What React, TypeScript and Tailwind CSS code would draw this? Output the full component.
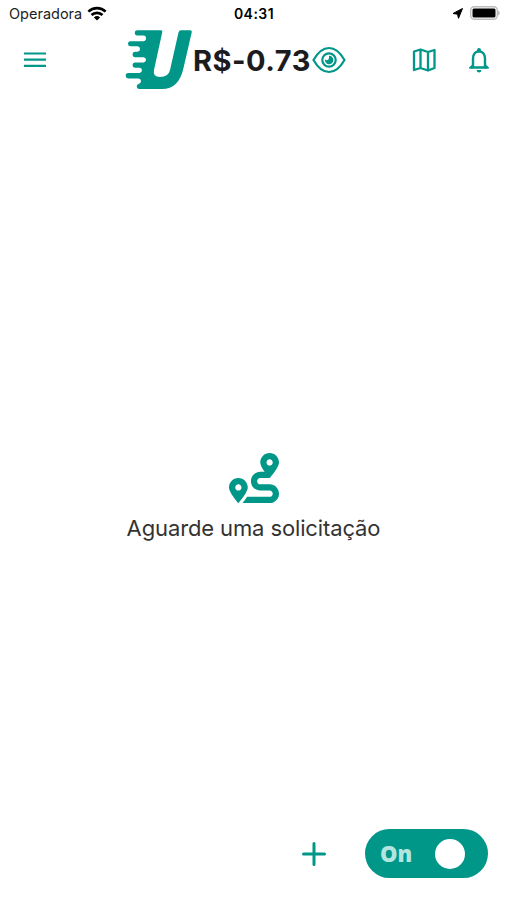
import React, { useState } from 'react';
import { FaRoute } from 'react-icons/fa';

const StatusBar = () => (
  <div className="flex h-7 items-center justify-between pl-[9px] pr-[7px] text-black">
    <div className="flex w-[180px] items-center gap-[5px]">
      <span className="text-[14.5px] leading-7 text-[#222]">Operadora</span>
      <svg className="-mt-0.5" width="20" height="15" viewBox="0 0 20 15" fill="none" stroke="currentColor" strokeWidth="2.7">
        <path d="M1.4 5.6a12.4 12.4 0 0 1 17.2 0" />
        <path d="M4.5 9a8 8 0 0 1 11 0" />
        <path d="M10 14.5 6.9 11.4a4.5 4.5 0 0 1 6.2 0z" fill="currentColor" stroke="none" />
      </svg>
    </div>
    <span className="mr-px text-[14px] font-semibold leading-7 tracking-[0.45px]">04:31</span>
    <div className="-mt-0.5 flex w-[180px] items-center justify-end gap-[7px]">
      <svg width="11" height="11" viewBox="0 0 11 11" fill="currentColor" stroke="currentColor" strokeWidth="1" strokeLinejoin="round">
        <path d="M10.500 0.500 6.500 10.300 5.500 6.200 1 5.500z" />
      </svg>
      <svg width="30" height="14" viewBox="0 0 30 14">
        <rect x=".7" y=".7" width="26.6" height="12.6" rx="3.5" fill="#fff" stroke="#bcbcbc" strokeWidth="1.4" />
        <rect x="2.5" y="2.5" width="23" height="9" rx="1.5" fill="#000" />
        <path d="M28 4.5c2.3.8 2.3 4.2 0 5z" fill="#bcbcbc" />
      </svg>
    </div>
  </div>
);

const Logo = () => (
  <svg className="shrink-0" width="68" height="60" viewBox="0 0 68 60" fill="currentColor">
    <path d="M12 0.300H36Q37.700 0.300 37.300 2L29 40Q27.500 47 35 47Q43.500 47 45 40L53.500 2.500Q54 0.300 56 0.300H65Q67.200 0.300 66.700 2.500L58.500 38Q54 59 37 59H14Q11.700 58.700 11.700 56.500T14 53.800Q16 53.300 16 51T13.500 48.500H3.200Q0.700 48.300 0.700 45.700T3.200 43H14.500Q17 42.500 17 40.200T14.500 37.700H10Q7.500 37.500 7.500 35T10 32.400H18.500Q21 32 21 29.700T18.500 27.200H10Q7.500 27 7.500 24.500T10 21.700H12.500Q15 21.500 15 19T12.500 16.300H5.500Q3 16.200 3 13.700T5.500 11.200H18.500Q21 11 21 8.300T18.500 5.600H12Q9.700 5.400 9.700 3T12 0.300Z" />
  </svg>
);

const Header = ({ balance }: { balance: string }) => {
  const [visible, setVisible] = useState(true);

  return (
    <header className="flex h-[64px] items-center pl-6 pr-[17px] text-[#009688]">
      <button aria-label="Menu" className="mr-[79px]">
        <svg width="22" height="16" viewBox="0 0 22 16" stroke="currentColor" strokeWidth="2.2">
          <path d="M0 1.500H22M0 7.700H22M0 13.900H22" />
        </svg>
      </button>
      <Logo />
      <span className="w-[119px] whitespace-nowrap text-[29px] font-bold leading-none tracking-[0.5px] text-[#1c1c1e]">
        {visible ? balance : 'R$ ****'}
      </span>
      <button aria-label="Saldo" onClick={() => setVisible(!visible)}>
        <svg width="34" height="28" viewBox="0 0 34 28" fill="none" stroke="currentColor" strokeWidth="2.2">
          <path d="M1.500 14C6 6 11 2 17 2S28 6 32.500 14C28 22 23 26 17 26S6 22 1.500 14Z" />
          <circle cx="17" cy="14" r="6.700" />
          <path d="M17 9.800v2.200a2.200 2.200 0 0 1-4 1.200 4.200 4.200 0 1 0 4-3.400Z" fill="currentColor" stroke="none" />
        </svg>
      </button>
      <button aria-label="Mapa" className="ml-auto">
        <svg width="24" height="24" viewBox="0 0 24 24" fill="none" stroke="currentColor" strokeWidth="2.300" strokeLinejoin="round">
          <path d="M2 3.500 8.500 1.500 16 4 22.500 2V20L16 22.500 8.500 20 2 22Z M8.500 1.500V20M16 4V22.500" />
        </svg>
      </button>
      <button aria-label="Notificações" className="ml-[32px]">
        <svg width="22" height="26" viewBox="0 0 22 26">
          <path d="M2.500 20.500H19.500M5 20V11.500C5 7 7.500 4.500 11 4.500S17 7 17 11.500V20" fill="none" stroke="currentColor" strokeWidth="2.400" />
          <path d="M9 4V3a2 2 0 0 1 4 0V4ZM1 21.500V20.500L5 17V21.500ZM21 21.500V20.500L17 17V21.500ZM8.500 23H13.500Q13 25.500 11 25.500T8.500 23Z" fill="currentColor" />
        </svg>
      </button>
    </header>
  );
};

const Footer = () => {
  const [online, setOnline] = useState(true);

  return (
    <footer className="flex h-[49px] items-center justify-end pr-[19px] text-[#009688]">
      <button aria-label="Adicionar" className="mr-[39px]">
        <svg width="24" height="24" viewBox="0 0 24 24" stroke="currentColor" strokeWidth="3" strokeLinecap="round">
          <path d="M12 1.500V22.500M1.500 12H22.500" />
        </svg>
      </button>
      <button
        onClick={() => setOnline(!online)}
        className="flex h-[49px] w-[123px] items-center justify-between rounded-full bg-[#009688] pl-[15px] pr-[23px]"
      >
        <span className="pb-0.5 font-['Noto_Sans',sans-serif] text-[22px] font-black leading-none text-[#b2e5df]">
          {online ? 'On' : 'Off'}
        </span>
        <span className="size-[30px] rounded-full bg-white" />
      </button>
    </footer>
  );
};

export default function App() {
  return (
    <div className="flex h-[900px] w-full flex-col bg-white pb-[22px] font-['Inter',sans-serif]">
      <StatusBar />
      <Header balance="R$-0.73" />
      <main className="flex flex-1 flex-col items-center pt-[361px]">
        <FaRoute className="size-[50px] text-[#009688]" />
        <p className="mt-[9px] text-[22px] leading-8 tracking-[-0.12px] text-[#333]">Aguarde uma solicitação</p>
      </main>
      <Footer />
    </div>
  );
}
